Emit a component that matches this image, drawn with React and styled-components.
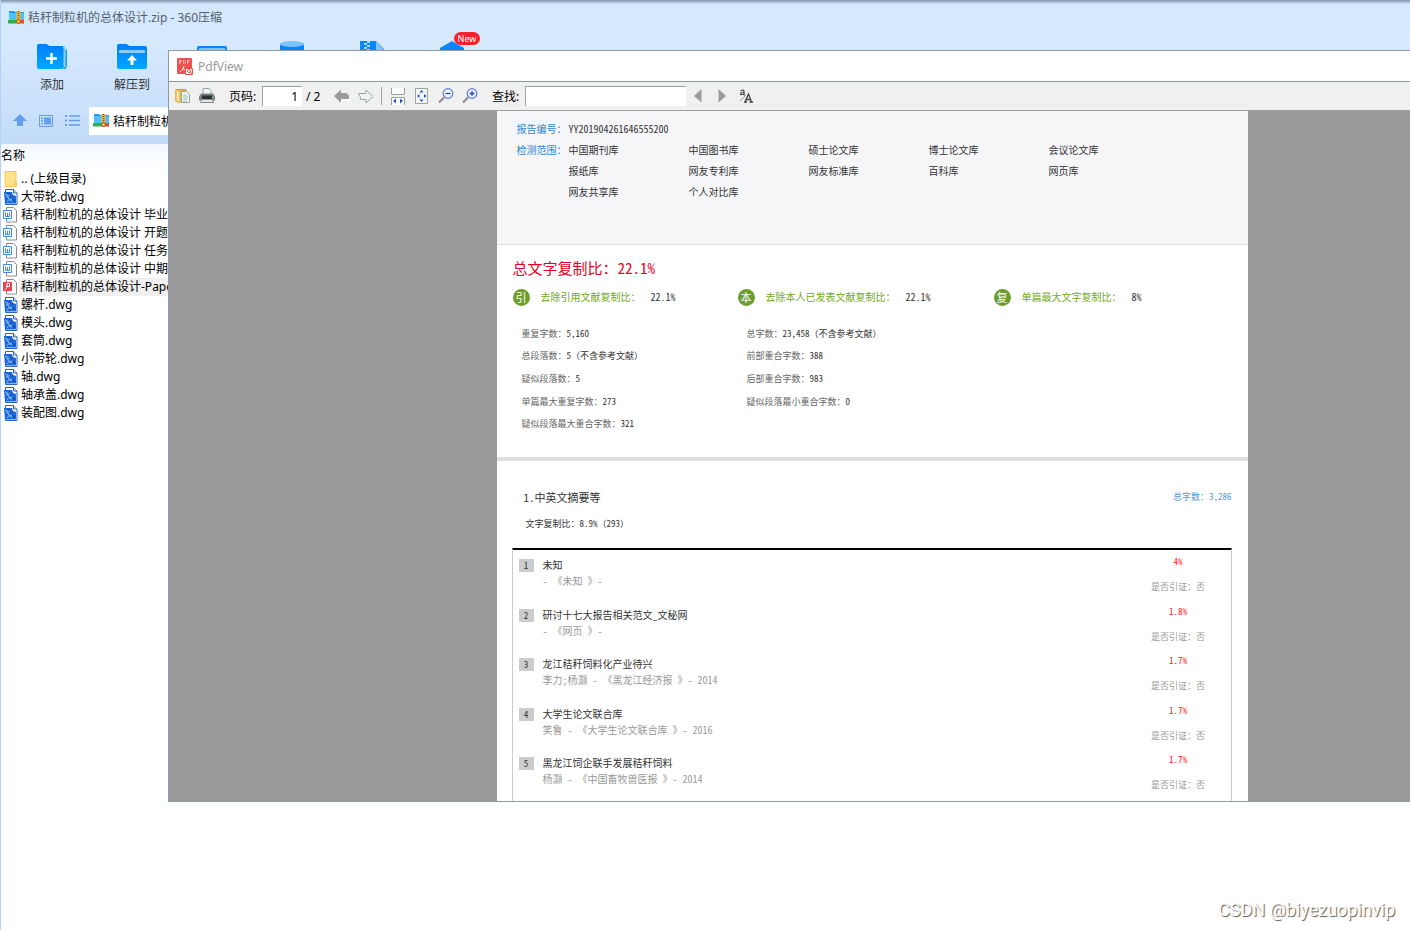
import React from 'react';
import styled, { createGlobalStyle } from 'styled-components';

const GlobalStyle = createGlobalStyle`
  * {
    box-sizing: border-box;
  }

  body {
    margin: 0;
    background: #ffffff;
    font-family: 'Noto Sans', 'Noto Sans CJK SC', sans-serif;
    font-size: 12px;
    color: #000000;
  }

  button, input {
    font: inherit;
    color: inherit;
  }

  ul, ol, dl, dd, h1, h2, p {
    margin: 0;
    padding: 0;
    list-style: none;
    font-size: inherit;
    font-weight: normal;
  }
`;

const Desktop = styled.div`
  position: relative;
  min-height: 100vh;
  overflow: hidden;
  border-left: 1px solid #b4d2f5;
  background: #ffffff;
`;

/* archive window */

const ArchiveHeader = styled.header`
  background: linear-gradient(#d3e8fe, #d6e9fd 30%, #c2dcf9);
  border-bottom: 1px solid #bfdaf8;
`;

const TopShade = styled.div`
  height: 4px;
  background: linear-gradient(#7f93ab, #d3e8fe);
`;

const ArchiveTitle = styled.h1`
  display: flex;
  align-items: center;
  gap: 3px;
  height: 26px;
  padding-left: 7px;
  color: #555f6b;
`;

const Actions = styled.div`
  display: flex;
  height: 70px;
  padding: 10px 0 0 11px;
`;

const ActionButton = styled.button`
  position: relative;
  display: flex;
  flex-direction: column;
  align-items: center;
  gap: 6px;
  width: 80px;
  padding: 0;
  border: 0;
  background: none;
  color: #333333;
  line-height: 18px;
`;

const NewBadge = styled.span`
  position: absolute;
  top: -8px;
  left: 42px;
  width: 26px;
  border-radius: 7px;
  background: #f5222d;
  color: #ffffff;
  font-size: 9px;
  line-height: 13px;
  text-align: center;
`;

const AddressBar = styled.nav`
  display: flex;
  align-items: center;
  height: 43px;
  padding: 0 0 2px 6px;
`;

const NavButton = styled.button`
  display: flex;
  justify-content: center;
  width: 26px;
  padding: 0;
  border: 0;
  background: none;
`;

const Address = styled.div`
  display: flex;
  align-items: center;
  flex: 1;
  gap: 3px;
  height: 28px;
  margin-left: 4px;
  padding-left: 4px;
  background: #ffffff;
`;

const ListHeader = styled.div`
  height: 26px;
  background: linear-gradient(#f2f8ff, #ffffff);
  line-height: 23px;
`;

const FileRow = styled.li`
  display: flex;
  align-items: center;
  height: 18px;
  padding-left: 2px;
  white-space: nowrap;
`;

const FileName = styled.span`
  flex: 1;
  margin-left: 1px;
  padding-left: 2px;
  background: ${({ $selected }) => ($selected ? '#f0f0f0' : 'none')};
  line-height: 18px;
`;

/* viewer window, partly off the right edge of the screen */

const Viewer = styled.section`
  position: absolute;
  top: 50px;
  bottom: 128px;
  left: 167px;
  right: -166px;
  display: flex;
  flex-direction: column;
  border: 1px solid #8e9aa6;
  background: #999999;
`;

const ViewerTitle = styled.h2`
  display: flex;
  align-items: center;
  gap: 4px;
  height: 30px;
  padding-left: 8px;
  background: #ffffff;
  color: #999999;
`;

const Toolbar = styled.div`
  display: flex;
  align-items: center;
  height: 30px;
  padding-left: 2px;
  border-top: 1px solid #8e9a9a;
  border-bottom: 1px solid #a0a0a0;
  background: #f0f0f0;
`;

const ToolButton = styled.button`
  display: flex;
  align-items: center;
  justify-content: center;
  width: 24px;
  height: 24px;
  padding: 0;
  border: 0;
  background: none;
`;

const ToolLabel = styled.label`
  width: 33px;
  margin-left: 10px;
`;

const ToolInput = styled.input`
  width: ${({ $width }) => $width}px;
  height: 20px;
  padding: 0 4px;
  border: 0;
  border-top: 1px solid #a0a0a0;
  border-left: 1px solid #a0a0a0;
  outline: 0;
  background: #ffffff;
  text-align: ${({ $align }) => $align || 'left'};
`;

const PageTotal = styled.span`
  width: 28px;
  padding-left: 4px;
`;

const Separator = styled.span`
  width: 1px;
  height: 18px;
  margin: 0 4px 0 3px;
  background: #a0a0a0;
`;

const Sheet = styled.article`
  display: flex;
  flex: 1;
  flex-direction: column;
  width: 100%;
  max-width: 751px;
  min-height: 0;
  margin: 0 auto;
  overflow: hidden;
  background: #ffffff;
  color: #333333;
  font-family: 'Noto Sans Mono CJK SC', 'Noto Sans CJK SC', sans-serif;
  font-size: 9px;
`;

const ReportHead = styled.dl`
  display: grid;
  grid-template-columns: 52px 1fr;
  align-content: start;
  flex: none;
  height: 134px;
  padding: 7px 20px;
  border-bottom: 1px solid #dddde0;
  background: #f6f6f9;
  font-size: 10px;
  line-height: 21px;
`;

const HeadLabel = styled.dt`
  color: #2d87cf;
`;

const Scope = styled.ul`
  display: grid;
  grid-template-columns: repeat(5, 120px);
`;

const Summary = styled.section`
  flex: none;
  padding: 12px 16px 22px;
  border-bottom: 4px solid #e0e0e0;
`;

const TotalRatio = styled.h2`
  color: #e60026;
  font-size: 15px;
  line-height: 22px;
`;

const Ratios = styled.ul`
  display: grid;
  grid-template-columns: 225px 256px 1fr;
  padding-top: 9px;
`;

const Ratio = styled.li`
  display: flex;
  align-items: center;
  color: #6fab17;
  font-size: 10px;
  line-height: 18px;
`;

const RatioMark = styled.span`
  width: 17px;
  height: 17px;
  margin-right: 11px;
  border-radius: 50%;
  background: #6d9e2b;
  color: #ffffff;
  font-size: 11px;
  line-height: 16px;
  text-align: center;
`;

const RatioValue = styled.span`
  margin-left: 10px;
  color: #333333;
`;

const Stats = styled.dl`
  display: grid;
  grid-template-columns: 225px 1fr;
  grid-template-rows: repeat(5, 1fr);
  grid-auto-flow: column;
  height: 113px;
  margin-top: 16px;
  padding-left: 9px;
`;

const Stat = styled.div`
  display: flex;
  align-items: center;
  color: #666666;

  dd {
    color: #333333;
  }
`;

const ChapterHead = styled.div`
  display: flex;
  flex: none;
  justify-content: space-between;
  padding: 26px 16px 0 27px;
  line-height: 20px;
`;

const ChapterTitle = styled.h2`
  font-size: 11px;
`;

const WordCount = styled.span`
  color: #4d9ad5;
`;

const ChapterRatio = styled.p`
  flex: none;
  padding: 8px 29px 15px;
  line-height: 18px;
`;

const Sources = styled.ol`
  display: grid;
  grid-template-rows: repeat(5, 1fr);
  flex: 1;
  margin: 0 16px 0 15px;
  padding: 3px 0 0 6px;
  border: 1px solid #cccccc;
  border-top: 2px solid #000000;
  border-bottom: 0;
`;

const Source = styled.li`
  display: flex;
  align-items: flex-start;
`;

const SourceIndex = styled.span`
  width: 15px;
  margin: 6px 9px 0 0;
  background: #cccccc;
  line-height: 13px;
  text-align: center;
`;

const SourceText = styled.div`
  flex: 1;
  padding-top: 4px;
  font-size: 10px;
  line-height: 16px;
`;

const SourceMeta = styled.p`
  color: #999999;
`;

const SourceSide = styled.div`
  display: flex;
  flex-direction: column;
  gap: 9px;
  width: 105px;
  padding-top: 1px;
  color: #999999;
  line-height: 16px;
  text-align: center;
`;

const SourceRatio = styled.span`
  color: #ff1a1a;
`;

const Watermark = styled.div`
  position: absolute;
  right: 15px;
  bottom: 9px;
  color: #ffffff;
  font-family: Roboto, 'Liberation Sans', sans-serif;
  font-size: 18px;
  line-height: 22px;
  text-shadow: 1px 1px 1px #555555;
`;

/* icons */

const ZipIcon = () => (
  <svg width="17" height="15" viewBox="0 0 17 15">
    <path d="M1 1h5l1 1h9v9H1z" fill="#1e9cf0" />
    <path d="M1 3h15v7H1z" fill="#4cc0fa" />
    <path d="M0 10h8v3.500H0z" fill="#2fae4c" />
    <path d="M8 10h8v3.500H8z" fill="#e8452c" />
    <path d="M8.500 1h4v12h-4z" fill="#f7b52c" />
    <path d="M10.500 1v9" stroke="#7b4a12" strokeWidth="1.400" strokeDasharray="1 1" />
    <circle cx="10.500" cy="11.500" r="1.800" fill="#ffd45a" stroke="#8a5512" />
  </svg>
);

const BlueGradient = ({ id }) => (
  <defs>
    <linearGradient id={id} x1="0" y1="0" x2="0" y2="1">
      <stop offset="0" stopColor="#007dfa" />
      <stop offset="1" stopColor="#00a8ff" />
    </linearGradient>
  </defs>
);

const AddIcon = () => (
  <svg width="32" height="30" viewBox="0 -4 32 30">
    <BlueGradient id="add" />
    <path d="M1 1.500Q1 0 2.500 0h8l3 2H26q2 0 2 2v19q0 2-2 2H2.500Q1 25 1 23z" fill="url(#add)" />
    <path d="M27 2.500q1.500 0 1.500 2V22" fill="none" stroke="#8acbff" strokeWidth="2" />
    <path d="M29.500 5q1.500 0 1.500 2v14q0 4-3 4v-2h1.500z" fill="#0a9bff" />
    <path d="M15.500 9v11M10 14.500h11" stroke="#ffffff" strokeWidth="2.400" />
  </svg>
);

const ExtractIcon = () => (
  <svg width="32" height="30" viewBox="0 -4 32 30">
    <BlueGradient id="extract" />
    <path d="M1 1.500Q1 0 2.500 0h8l3 2H29q2 0 2 2v19q0 2-2 2H3q-2 0-2-2z" fill="url(#extract)" />
    <path d="M3 6.500Q3 6 4 6h24q1 0 1 1v2H3z" fill="#8acbff" />
    <path d="M16 11l5 5.500h-3.500V21h-3v-4.500H11z" fill="#ffffff" />
  </svg>
);

const BoxIcon = () => (
  <svg width="32" height="30" viewBox="0 0 32 30">
    <path d="M1 8q0-2 2-2h26q2 0 2 2v20H1z" fill="#0a86fa" />
    <path d="M3 9h26" stroke="#9fd3ff" strokeWidth="1.500" />
  </svg>
);

const DiskIcon = () => (
  <svg width="32" height="30" viewBox="0 0 32 30">
    <path d="M4 4v20q12 6 24 0V4z" fill="#0a86fa" />
    <ellipse cx="16" cy="4" rx="12" ry="3" fill="#7cc4ff" />
  </svg>
);

const ZipFileIcon = () => (
  <svg width="32" height="30" viewBox="0 0 32 30">
    <path d="M4 1h16l8 8v19H4z" fill="#0a86fa" />
    <path d="M20 1l8 9h-8z" fill="#7cc4ff" />
    <path d="M8 3h3v2H8zM11 5h3v2h-3zM8 7h3v2H8zM11 1h3v2h-3zM11 9h3v2h-3z" fill="#a9d8ff" />
  </svg>
);

const CubeIcon = () => (
  <svg width="32" height="30" viewBox="0 0 32 30">
    <path d="M4 8l12-7 12 7v14l-12 6-12-6z" fill="#0a86fa" />
    <path d="M10 11l6 3 6-3" fill="none" stroke="#c9e6ff" strokeWidth="2" />
  </svg>
);

const UpIcon = () => (
  <svg width="14" height="13" viewBox="0 0 14 13">
    <path d="M7 0l7 7h-4v5H4V7H0z" fill="#629df0" />
  </svg>
);

const ViewIcon = () => (
  <svg width="14" height="12" viewBox="0 0 14 12" fill="#629df0">
    <path d="M.5.5h13v11H.5z" fill="none" stroke="#629df0" />
    <path d="M2 2.500h2v1.500H2zM2 5.200h2v1.500H2zM2 8h2v1.500H2zM5 2.500h7v7H5z" />
  </svg>
);

const ListIcon = () => (
  <svg width="15" height="12" viewBox="0 0 15 12" fill="#629df0">
    <path d="M0 0h2v2H0zM0 4.500h2v2H0zM0 9h2v2H0zM4 .3h11v1.400H4zM4 4.800h11v1.400H4zM4 9.300h11v1.400H4z" />
  </svg>
);

const FolderIcon = () => (
  <svg width="15" height="17" viewBox="0 0 15 17">
    <path d="M2 .5h11v15H2z" fill="#ffe28c" stroke="#f0cb5c" />
    <path d="M11.500 10.500h2.500v5.500h-3z" fill="#f3cf62" />
  </svg>
);

const DwgIcon = () => (
  <svg width="15" height="16" viewBox="0 0 15 16">
    <path d="M2.500.5h8L14 4v11.500H2.500z" fill="#ffffff" stroke="#2c62bd" />
    <path d="M1 3h8l1 3 3 1v7.500H2z" fill="#1c68d8" />
    <path d="M2 5q3 0 3 3t4 4M8 5q-3 3-5 3M4 13q1-3 5-3" fill="none" stroke="#86bdf8" />
    <path d="M10 10l2 3M6 4l3 4" stroke="#0b3f9c" />
    <path d="M10.500.5V4H14" fill="#dbe9fd" stroke="#2c62bd" />
  </svg>
);

const DocumentShape = () => (
  <path d="M3.500.5h7L13.500 3.500v11.500h-10z" fill="#ffffff" stroke="#8c8c8c" />
);

const WordIcon = () => (
  <svg width="15" height="16" viewBox="0 0 15 16">
    <DocumentShape />
    <path d="M.5 3.500h8v8h-8z" fill="#ffffff" stroke="#4a84e8" />
    <path d="M2.500 5.500v4h4v-4M4.500 6v3" fill="none" stroke="#4a84e8" />
  </svg>
);

const PdfFileIcon = () => (
  <svg width="15" height="16" viewBox="0 0 15 16">
    <DocumentShape />
    <path d="M0 3h9v9H0z" fill="#e5484d" />
    <path d="M2 10.500l2-2V4.500h2.500v3H3" fill="none" stroke="#ffffff" />
  </svg>
);

const PdfIcon = () => (
  <svg width="17" height="17" viewBox="0 0 17 17">
    <rect width="15" height="16" rx="1" fill="#ee5350" />
    <path d="M2.500 6V2.500h1.500v1.500h-1.500M6.500 2.500v3h1l1-1v-1l-1-1zM10.500 6V2.500h2M10.500 4h1.500" fill="none" stroke="#ffd3d0" strokeWidth=".8" />
    <path d="M3 14l3-3 1-3M6 11l3 1" fill="none" stroke="#ffffff" />
    <path d="M8.500 10.500h7v6h-7z" fill="#ffffff" stroke="#ee5350" />
    <circle cx="12" cy="13" r="1.500" fill="none" stroke="#ee5350" />
    <path d="M13 14l2 2" stroke="#ee5350" />
  </svg>
);

const OpenIcon = () => (
  <svg width="16" height="16" viewBox="0 0 16 16">
    <path d="M1 1.500h10v12H1z" fill="#e5bc5c" stroke="#c79a3f" />
    <path d="M6.500 3.500h5l3 3v8h-8z" fill="#f5faf6" stroke="#8fa69b" />
    <path d="M8 7h4M8 9h5M8 11h5M8 13h4" stroke="#8eaaa0" strokeWidth=".8" />
    <path d="M1 1.500l4 2V15l-4-2z" fill="#ffe19a" stroke="#d6ab50" />
  </svg>
);

const PrintIcon = () => (
  <svg width="16" height="16" viewBox="0 0 16 16">
    <path d="M4 .5h6l2 2V7H4z" fill="#f6fbfa" stroke="#8ea3a4" />
    <path d="M2 5.500h12l2 3v4H0v-4z" fill="#7b7f82" />
    <path d="M3 7.500h10v3.500H3z" fill="#2d3032" />
    <path d="M2.500 11.500h11l1 3h-13z" fill="#e4e7e8" stroke="#8a8d8f" />
    <path d="M13 9.500h2" stroke="#72d14a" />
  </svg>
);

const BackIcon = () => (
  <svg width="16" height="15" viewBox="0 0 16 15">
    <path d="M1 8L8 1.500V5h5.500l2 2v5H8v3z" fill="#ffffff" />
    <path d="M0 7L7 .5V4h5.500L15 6.500V10H7v4z" fill="#9b9b9b" />
  </svg>
);

const ForwardIcon = () => (
  <svg width="16" height="15" viewBox="0 0 16 15">
    <path d="M.5 4.500H8V1l7 6.500L8 14v-3.500H2.500v-2z" fill="#eef5f0" stroke="#97a9a1" />
  </svg>
);

const FitWidthIcon = () => (
  <svg width="14" height="17" viewBox="0 0 14 17">
    <path d="M.5 0v6.500h13V0M.5 17V9.500h13V17" fill="#fafdfa" stroke="#93a69b" />
    <path d="M2 13l3-2.500v5zM12 13l-3-2.500v5z" fill="#2755c9" />
  </svg>
);

const FitPageIcon = () => (
  <svg width="14" height="17" viewBox="0 0 14 17">
    <path d="M.5.5h12v15H.5z" fill="#f5faf6" stroke="#93a69b" />
    <path d="M6.500 2l2 2.500h-4zM6.500 14l2-2.500h-4zM2 8l2.500-2v4zM11.500 8L9 6v4z" fill="#2755c9" />
  </svg>
);

const ZoomIcon = ({ plus }) => (
  <svg width="16" height="16" viewBox="0 0 16 16">
    <path d="M1 14.500l5-5" stroke="#8c8c8c" strokeWidth="2.200" />
    <circle cx="10" cy="5.500" r="4.800" fill="#edf3ff" stroke="#5f7bd8" strokeWidth="1.200" />
    <path d={plus ? 'M7.500 5.500h5M10 3v5' : 'M7.500 5.500h5'} stroke="#2a48b8" strokeWidth="1.300" />
  </svg>
);

const PrevIcon = () => (
  <svg width="8" height="14" viewBox="0 0 8 14">
    <path d="M7.500 0v13.500L0 7z" fill="#9b9b9b" />
  </svg>
);

const NextIcon = () => (
  <svg width="8" height="14" viewBox="0 0 8 14">
    <path d="M.5 0v13.500L8 7z" fill="#9b9b9b" />
  </svg>
);

const CaseIcon = () => (
  <svg width="14" height="14" viewBox="0 0 14 14" fill="none" stroke="#444444">
    <path d="M1.500 2q2.500-2 3.500 0v3.500l1 .5M5 3q-3.500.5-3.500 2T5 5" strokeWidth="1.200" />
    <path d="M6 13l3.500-8 3 8M7.500 10.500h4M5 13h3M10.500 13h3.500" strokeWidth="1.300" />
    <path d="M1 12l6-6" stroke="#999999" />
  </svg>
);

const actions = [
  { label: '添加', Icon: AddIcon, showLabel: true },
  { label: '解压到', Icon: ExtractIcon, showLabel: true },
  { label: '一键解压', Icon: BoxIcon },
  { label: '删除', Icon: DiskIcon },
  { label: '密码', Icon: ZipFileIcon },
  { label: '工具', Icon: CubeIcon, isNew: true },
];

const files = [
  { name: '.. (上级目录)', Icon: FolderIcon },
  { name: '大带轮.dwg', Icon: DwgIcon },
  { name: '秸秆制粒机的总体设计 毕业', Icon: WordIcon },
  { name: '秸秆制粒机的总体设计 开题', Icon: WordIcon },
  { name: '秸秆制粒机的总体设计 任务', Icon: WordIcon },
  { name: '秸秆制粒机的总体设计 中期', Icon: WordIcon },
  { name: '秸秆制粒机的总体设计-Pape', Icon: PdfFileIcon, selected: true },
  { name: '螺杆.dwg', Icon: DwgIcon },
  { name: '模头.dwg', Icon: DwgIcon },
  { name: '套筒.dwg', Icon: DwgIcon },
  { name: '小带轮.dwg', Icon: DwgIcon },
  { name: '轴.dwg', Icon: DwgIcon },
  { name: '轴承盖.dwg', Icon: DwgIcon },
  { name: '装配图.dwg', Icon: DwgIcon },
];

const scope = [
  '中国期刊库', '中国图书库', '硕士论文库', '博士论文库', '会议论文库',
  '报纸库', '网友专利库', '网友标准库', '百科库', '网页库',
  '网友共享库', '个人对比库',
];

const ratios = [
  { mark: '引', label: '去除引用文献复制比：', value: '22.1%' },
  { mark: '本', label: '去除本人已发表文献复制比：', value: '22.1%' },
  { mark: '复', label: '单篇最大文字复制比：', value: '8%' },
];

const stats = [
  ['重复字数：', '5,160'],
  ['总段落数：', '5（不含参考文献）'],
  ['疑似段落数：', '5'],
  ['单篇最大重复字数：', '273'],
  ['疑似段落最大重合字数：', '321'],
  ['总字数：', '23,458（不含参考文献）'],
  ['前部重合字数：', '388'],
  ['后部重合字数：', '983'],
  ['疑似段落最小重合字数：', '0'],
];

const sources = [
  { title: '未知', meta: '- 《未知 》-', ratio: '4%' },
  { title: '研讨十七大报告相关范文_文秘网', meta: '- 《网页 》-', ratio: '1.8%' },
  { title: '龙江秸秆饲料化产业待兴', meta: '李力;杨灏 - 《黑龙江经济报 》- 2014', ratio: '1.7%' },
  { title: '大学生论文联合库', meta: '笑鲁 - 《大学生论文联合库 》- 2016', ratio: '1.7%' },
  { title: '黑龙江饲企联手发展秸秆饲料', meta: '杨灏 - 《中国畜牧兽医报 》- 2014', ratio: '1.7%' },
];

function Archive() {
  return (
    <main>
      <ArchiveHeader>
        <TopShade />
        <ArchiveTitle><ZipIcon />秸秆制粒机的总体设计.zip - 360压缩</ArchiveTitle>
        <Actions>
          {actions.map(({ label, Icon, showLabel, isNew }) => (
            <ActionButton key={label} type="button" aria-label={label}>
              <Icon />
              {showLabel && label}
              {isNew && <NewBadge>New</NewBadge>}
            </ActionButton>
          ))}
        </Actions>
        <AddressBar>
          <NavButton type="button" aria-label="向上"><UpIcon /></NavButton>
          <NavButton type="button" aria-label="视图"><ViewIcon /></NavButton>
          <NavButton type="button" aria-label="列表"><ListIcon /></NavButton>
          <Address><ZipIcon />秸秆制粒机的总体设计.zip</Address>
        </AddressBar>
      </ArchiveHeader>
      <ListHeader>名称</ListHeader>
      <ul>
        {files.map(({ name, Icon, selected }) => (
          <FileRow key={name}>
            <Icon />
            <FileName $selected={selected}>{name}</FileName>
          </FileRow>
        ))}
      </ul>
    </main>
  );
}

function ViewerToolbar() {
  return (
    <Toolbar>
      <ToolButton type="button" aria-label="打开"><OpenIcon /></ToolButton>
      <ToolButton type="button" aria-label="打印"><PrintIcon /></ToolButton>
      <ToolLabel htmlFor="page">页码:</ToolLabel>
      <ToolInput id="page" $width={40} $align="right" defaultValue="1" />
      <PageTotal>/ 2</PageTotal>
      <ToolButton type="button" aria-label="上一页"><BackIcon /></ToolButton>
      <ToolButton type="button" aria-label="下一页"><ForwardIcon /></ToolButton>
      <Separator />
      <ToolButton type="button" aria-label="适合宽度"><FitWidthIcon /></ToolButton>
      <ToolButton type="button" aria-label="适合页面"><FitPageIcon /></ToolButton>
      <ToolButton type="button" aria-label="缩小"><ZoomIcon /></ToolButton>
      <ToolButton type="button" aria-label="放大"><ZoomIcon plus /></ToolButton>
      <ToolLabel htmlFor="find">查找:</ToolLabel>
      <ToolInput id="find" $width={161} />
      <ToolButton type="button" aria-label="查找上一个"><PrevIcon /></ToolButton>
      <ToolButton type="button" aria-label="查找下一个"><NextIcon /></ToolButton>
      <ToolButton type="button" aria-label="区分大小写"><CaseIcon /></ToolButton>
    </Toolbar>
  );
}

function Report() {
  return (
    <Sheet>
      <ReportHead>
        <HeadLabel>报告编号：</HeadLabel>
        <dd>YY201904261646555200</dd>
        <HeadLabel>检测范围：</HeadLabel>
        <dd>
          <Scope>
            {scope.map((name) => <li key={name}>{name}</li>)}
          </Scope>
        </dd>
      </ReportHead>
      <Summary>
        <TotalRatio>总文字复制比：22.1%</TotalRatio>
        <Ratios>
          {ratios.map(({ mark, label, value }) => (
            <Ratio key={mark}>
              <RatioMark>{mark}</RatioMark>
              {label}
              <RatioValue>{value}</RatioValue>
            </Ratio>
          ))}
        </Ratios>
        <Stats>
          {stats.map(([label, value]) => (
            <Stat key={label}>
              <dt>{label}</dt>
              <dd>{value}</dd>
            </Stat>
          ))}
        </Stats>
      </Summary>
      <ChapterHead>
        <ChapterTitle>1.中英文摘要等</ChapterTitle>
        <WordCount>总字数：3,286</WordCount>
      </ChapterHead>
      <ChapterRatio>文字复制比：8.9%（293）</ChapterRatio>
      <Sources>
        {sources.map(({ title, meta, ratio }, i) => (
          <Source key={title}>
            <SourceIndex>{i + 1}</SourceIndex>
            <SourceText>
              <p>{title}</p>
              <SourceMeta>{meta}</SourceMeta>
            </SourceText>
            <SourceSide>
              <SourceRatio>{ratio}</SourceRatio>
              <span>是否引证：否</span>
            </SourceSide>
          </Source>
        ))}
      </Sources>
    </Sheet>
  );
}

function App() {
  return (
    <Desktop>
      <GlobalStyle />
      <Archive />
      <Viewer>
        <ViewerTitle><PdfIcon />PdfView</ViewerTitle>
        <ViewerToolbar />
        <Report />
      </Viewer>
      <Watermark>CSDN @biyezuopinvip</Watermark>
    </Desktop>
  );
}

export default App;
